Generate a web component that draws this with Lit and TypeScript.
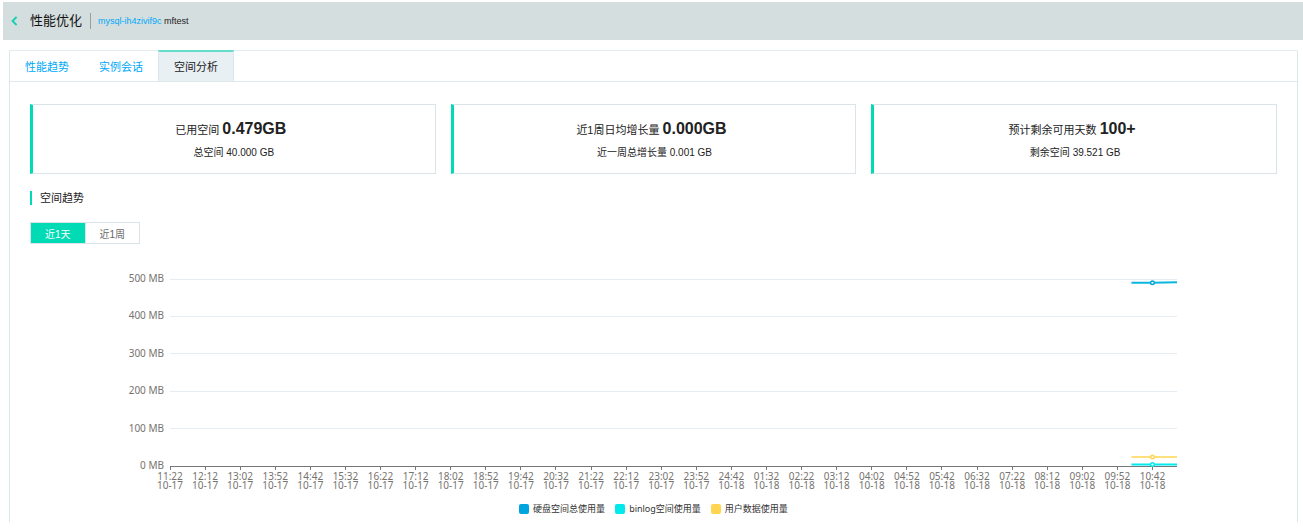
import { LitElement, html, svg, css } from "lit";
import { customElement, property, state } from "lit/decorators.js";
import { classMap } from "lit/directives/class-map.js";

const TIMES = [
  "11:22", "12:12", "13:02", "13:52", "14:42", "15:32", "16:22", "17:12", "18:02", "18:52",
  "19:42", "20:32", "21:22", "22:12", "23:02", "23:52", "24:42", "01:32", "02:22", "03:12",
  "04:02", "04:52", "05:42", "06:32", "07:22", "08:12", "09:02", "09:52", "10:42",
];
const FIRST_SLOT_NEXT_DAY = 16;

const SERIES = [
  { name: "硬盘空间总使用量", value: 490, tail: 491, color: "#00a5df", line: "#0cb7de" },
  { name: "binlog空间使用量", value: 4, tail: 4, color: "#00e9eb", line: "#00e9eb" },
  { name: "用户数据使用量", value: 24, tail: 24, color: "#ffd552", line: "#ffe07a" },
];

@customElement("stat-card")
class StatCard extends LitElement {
  @property() label = "";
  @property() value = "";
  @property() note = "";

  static styles = css`
    :host {
      display: flex;
      flex-direction: column;
      align-items: center;
      box-sizing: border-box;
      padding: 13px 0 8px;
      border: 1px solid #dbe5e9;
      border-left: 3px solid #00dbb5;
    }
    .main { padding-right: 6px; font-size: 11px; line-height: 22px; }
    .value { font-size: 16px; }
    .note { font-size: 10px; line-height: 24px; }
  `;

  render() {
    return html`
      <div class="main">${this.label} <strong class="value">${this.value}</strong></div>
      <div class="note">${this.note}</div>
    `;
  }
}

@customElement("usage-chart")
class UsageChart extends LitElement {
  static styles = css`
    :host { display: block; }
    .plot { display: block; width: 100%; height: auto; }
    .tick {
      font-family: "Noto Sans", "Noto Sans CJK SC", sans-serif;
      font-size: 10px;
      fill: #76736f;
    }
    .legend {
      display: flex;
      justify-content: center;
      gap: 10px;
      margin: 4px 0 0;
      padding: 0;
      list-style: none;
      font-family: "Noto Sans", "Noto Sans CJK SC", sans-serif;
      font-size: 9px;
      line-height: 14px;
      color: #333;
    }
    .item { display: flex; align-items: center; gap: 4px; }
    .swatch { display: block; }
  `;

  render() {
    const left = 140;
    const right = 1147;
    const base = 206;
    const step = (right - left) / 28.7;
    const y = (mb: number) => base - (mb * 187) / 500;
    return html`
      <svg class="plot" viewBox="0 0 1247 238" role="img" aria-label="空间趋势">
        ${[500, 400, 300, 200, 100, 0].map((mb) => svg`
          <text class="tick" text-anchor="end" x=${left - 6} y=${Math.round(y(mb)) + 3}>${mb} MB</text>
          <line x1=${left} x2=${right} y1=${Math.floor(y(mb)) + 0.5} y2=${Math.floor(y(mb)) + 0.5}
            stroke=${mb ? "#e6edf2" : "#77777a"} />
        `)}
        ${TIMES.map((time, i) => {
          const x = left + i * step;
          const mark = Math.floor(x) + 0.5;
          return svg`
            <line x1=${mark} x2=${mark} y1=${base} y2=${base + 4} stroke="#77777a" />
            <text class="tick" text-anchor="middle"><tspan x=${x} y=${base + 14}>${time}</tspan><tspan x=${x} y=${base + 23}>${i < FIRST_SLOT_NEXT_DAY ? "10-17" : "10-18"}</tspan></text>
          `;
        })}
        ${SERIES.map((s) => {
          const x = left + (TIMES.length - 1) * step;
          return svg`
            <polyline fill="none" stroke=${s.line} stroke-width="2"
              points="${x - 21},${y(s.value)} ${x},${y(s.value)} ${right},${y(s.tail)}" />
            <circle cx=${x} cy=${y(s.value)} r="1.8" fill="#fff" stroke=${s.color} stroke-width="1.4" />
          `;
        })}
      </svg>
      <ul class="legend">
        ${SERIES.map((s) => html`
          <li class="item">
            <svg class="swatch" width="10" height="10" viewBox="0 0 10 10" aria-hidden="true">
              <rect width="10" height="10" rx="2" fill=${s.color} />
            </svg>
            <span>${s.name}</span>
          </li>
        `)}
      </ul>
    `;
  }
}

@customElement("app-root")
class AppRoot extends LitElement {
  @state() private tab = 2;
  @state() private range = 0;

  static styles = css`
    :host {
      display: block;
      box-sizing: border-box;
      padding: 2px 0 7px 3px;
      background: #fff;
      color: #222;
      font-family: "Liberation Sans", "Noto Sans CJK SC", sans-serif;
    }
    button { font-family: inherit; cursor: pointer; }
    .header {
      display: flex;
      align-items: center;
      height: 38px;
      padding: 0 8px;
      background: #d5dede;
    }
    .back {
      display: flex;
      padding: 0;
      border: 0;
      background: none;
    }
    .title {
      margin: 0 8px 0 12px;
      font-size: 13px;
      line-height: 20px;
      font-weight: 400;
      color: #111;
    }
    .instance {
      padding-left: 7px;
      border-left: 1px solid #999fa0;
      font-size: 9px;
      line-height: 16px;
    }
    .link { color: #00a8f8; text-decoration: none; }
    .panel {
      margin: 10px 5px 0 6px;
      border: 1px solid #dbe7ea;
      border-top-color: #e4edf1;
      border-bottom: 0;
    }
    .tabs {
      display: flex;
      border-bottom: 1px solid #dfe8ec;
    }
    .tab {
      box-sizing: border-box;
      height: 30px;
      padding: 0 15px;
      border: 0;
      background: none;
      color: #00a8f8;
      font-size: 11px;
    }
    .tab.active {
      margin-top: -1px;
      height: 31px;
      border: 1px solid #dbe7ea;
      border-top: 2px solid #64dccb;
      border-bottom: 0;
      padding-bottom: 1px;
      background: #e8f0f4;
      color: #222;
    }
    .content { padding: 22px 20px 6px; }
    .cards {
      display: grid;
      grid-template-columns: repeat(3, 1fr);
      gap: 15px;
    }
    .section {
      margin: 17px 0;
      padding-left: 8px;
      border-left: 2px solid #00dbb5;
      font-size: 11px;
      line-height: 14px;
      font-weight: 400;
    }
    .ranges { display: flex; margin-bottom: 16px; }
    .range {
      box-sizing: border-box;
      height: 22px;
      padding: 0 14px;
      border: 1px solid #dbe5e9;
      background: #fff;
      color: #666;
      font-size: 10px;
    }
    .range + .range { border-left: 0; }
    .range.active { background: #00dbb5; color: #fff; }
  `;

  render() {
    return html`
      <header class="header">
        <button class="back" aria-label="返回">
          <svg width="7" height="10" viewBox="0 0 7 10" fill="none" stroke="#12d1b0" stroke-width="1.8">
            <path d="M5.6 1 1.5 5l4.1 4" />
          </svg>
        </button>
        <h1 class="title">性能优化</h1>
        <div class="instance"><a class="link" href="#">mysql-ih4zivif9c</a> mftest</div>
      </header>
      <main class="panel">
        <nav class="tabs" role="tablist">
          ${["性能趋势", "实例会话", "空间分析"].map((name, i) => html`
            <button role="tab" aria-selected=${this.tab === i}
              class=${classMap({ tab: true, active: this.tab === i })}
              @click=${() => (this.tab = i)}>${name}</button>
          `)}
        </nav>
        <div class="content">
          <div class="cards">
            <stat-card label="已用空间" value="0.479GB" note="总空间 40.000 GB"></stat-card>
            <stat-card label="近1周日均增长量" value="0.000GB" note="近一周总增长量 0.001 GB"></stat-card>
            <stat-card label="预计剩余可用天数" value="100+" note="剩余空间 39.521 GB"></stat-card>
          </div>
          <h2 class="section">空间趋势</h2>
          <div class="ranges">
            ${["近1天", "近1周"].map((name, i) => html`
              <button aria-pressed=${this.range === i}
                class=${classMap({ range: true, active: this.range === i })}
                @click=${() => (this.range = i)}>${name}</button>
            `)}
          </div>
          <usage-chart></usage-chart>
        </div>
      </main>
    `;
  }
}
